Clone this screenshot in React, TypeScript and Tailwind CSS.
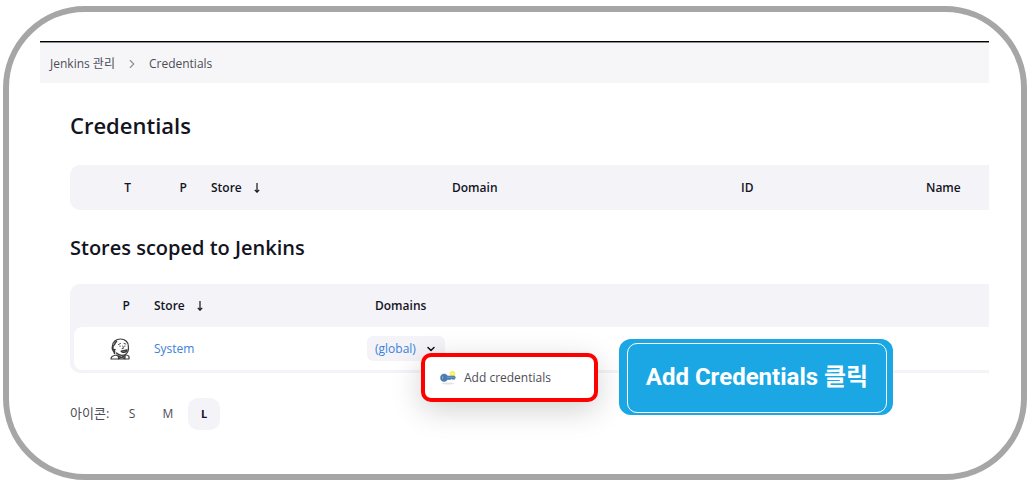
import { ChevronDown, ChevronRight } from "lucide-react";

function ButlerIcon() {
  return (
    <svg
      viewBox="0 0 20 22"
      className="ml-auto h-[22px] w-5"
      fill="none"
      stroke="#3a3a3a"
      strokeWidth="1.2"
      strokeLinecap="round"
      strokeLinejoin="round"
    >
      {/* head */}
      <path
        d="M4 14C2 12 2 9.500 2.500 8C2.500 4 6 1 10.500 1C15 1 18.300 4 18.300 8C18.800 11 18 14.500 15.500 16.500C12 18 8.500 17 6.500 15"
        fill="#fff"
      />
      <path d="M3.500 7.500C5.500 7 4.500 4.500 6.500 3.500M3 8.500C2 11 4 12.500 5 11.500M4.500 13V15.500" strokeWidth="1.6" />
      {/* face */}
      <path d="M8.500 6.500L10.500 5.500M14 5.500L15.800 6M10 8V8.500M14.800 8V8.500M12.800 8L13.500 10.300L12 10.700" strokeWidth="0.9" />
      <path d="M11 13.200C12.500 12 14.500 12.500 17 11.800C17 14.500 12.500 15.500 11 13.200Z" fill="#666" />
      {/* suit */}
      <path d="M1 21C0.800 18.500 3 17.500 6.500 17L8.500 18.500M1 21H19V18.500C18.500 17.500 17 17 15.500 17" />
      <path d="M8.500 18L11.500 19.200L15 17.500V20.800L11.500 19.500L8.500 20.800Z" fill="#777" />
    </svg>
  );
}

function NewCredentialIcon() {
  return (
    <svg viewBox="0 0 16 16" className="size-4 shrink-0">
      <ellipse cx="8" cy="13.500" rx="6" ry="1" fill="#e2e2e2" />
      <circle cx="12.500" cy="3.800" r="2.800" fill="#fbf04a" />
      <circle cx="12.500" cy="3.800" r="1" fill="#fffbc0" />
      <path
        d="M4 4C6 4 7 5 7.500 6H14.500L15.500 7.500L14.500 9.300H12.500L11.500 8.800L10.500 9.500H7.500C7 10.700 5.500 11.500 4 11.500C1.800 11.500 0.500 10 0.500 7.800C0.500 5.500 2 4 4 4Z"
        fill="#4a7db8"
        stroke="#3f70a6"
        strokeWidth="0.500"
      />
      <ellipse cx="2.800" cy="7.800" rx="0.800" ry="1.700" fill="#c3d2e3" stroke="#2f5785" strokeWidth="0.500" />
      <path d="M7 7.300H14.500" stroke="#87abd3" strokeWidth="0.700" />
    </svg>
  );
}

function SortArrow() {
  return (
    <svg viewBox="0 0 6 10" className="ml-3 inline-block h-[10px] w-[6px]" fill="none" stroke="#14141f" strokeWidth="1.200">
      <path d="M3 0V9M0.800 6.800L3 9.200L5.200 6.800" />
    </svg>
  );
}

const sizes = ["S", "M", "L"];

export default function App() {
  return (
    <div className="min-h-screen bg-white pt-[6px] pr-[2px] pb-[2px] pl-[3px] font-['Open_Sans','Noto_Sans_CJK_KR',sans-serif] text-[#14141f]">
      <div className="rounded-[82px] border-[6px] border-[#a6a6a6] pt-[29px] pr-8 pb-11 pl-[31px]">
        {/* Breadcrumbs */}
        <nav className="border-t border-black bg-[#f6f6f8]">
          <ol className="flex h-[41px] items-center gap-[10px] border-t border-[#8c8c8e] pt-[2px] pl-[10px] text-[12px] text-[#4d4d57]">
            <li>
              <a href="#manage">Jenkins 관리</a>
            </li>
            <li aria-hidden="true">
              <ChevronRight className="size-[14px] text-[#8f8fa3]" strokeWidth={2} />
            </li>
            <li>
              <a href="#credentials">Credentials</a>
            </li>
          </ol>
        </nav>

        <main className="pl-[30px]">
          <h1 className="pt-[26px] text-[22px] leading-8 font-semibold">Credentials</h1>

          <div className="mt-6 overflow-hidden rounded-l-[10px] bg-[#f3f3f8]">
            <table className="w-full table-fixed text-left text-[12px]">
              <thead>
                <tr className="h-[45px] *:px-3 *:font-semibold">
                  <th className="w-[73px] text-right">T</th>
                  <th className="w-[56px] text-right">P</th>
                  <th className="w-[241px]">
                    Store
                    <SortArrow />
                  </th>
                  <th className="w-[289px]">Domain</th>
                  <th className="w-[185px]">ID</th>
                  <th>Name</th>
                </tr>
              </thead>
            </table>
          </div>

          <h2 className="mt-6 text-[20px] leading-7 font-semibold">Stores scoped to Jenkins</h2>

          <div className="relative mt-[22px] rounded-l-[10px] bg-[#f3f3f8] pb-[3px] pl-1">
            <table className="w-full table-fixed border-separate border-spacing-0 text-left text-[12px]">
              <thead>
                <tr className="h-[43px] *:px-3 *:font-semibold">
                  <th className="w-[68px] text-right">P</th>
                  <th className="w-[221px]">
                    Store
                    <SortArrow />
                  </th>
                  <th>Domains</th>
                </tr>
              </thead>
              <tbody>
                <tr className="h-[43px] text-[#3c82d8] *:bg-white">
                  <td className="rounded-l-lg px-3">
                    <ButlerIcon />
                  </td>
                  <td className="px-3">
                    <a href="#system">System</a>
                  </td>
                  <td className="px-1">
                    <div className="relative flex w-[78px] items-center justify-between rounded-md bg-[#f3f3f8] px-2">
                      <a href="#global" className="leading-[25px]">
                        (global)
                      </a>
                      <button type="button" aria-label="Open menu" className="text-[#14141f]">
                        <ChevronDown className="size-3" strokeWidth={3} />
                      </button>
                      <div className="absolute top-[17px] left-[54px] z-10 w-[177px] rounded-[10px] border-4 border-[#fe0000] bg-white shadow-[0_8px_30px_rgba(0,0,0,0.18)]">
                        <button type="button" className="flex h-[41px] w-full items-center gap-2 px-[15px] text-[12px] text-[#4d4d57]">
                          <NewCredentialIcon />
                          Add credentials
                        </button>
                      </div>
                    </div>
                  </td>
                </tr>
              </tbody>
            </table>

            {/* Callout */}
            <div className="absolute top-[55px] left-[549px] h-[76px] w-[274px] rounded-xl bg-[#1aa7e4] pt-1 pr-[6px] pb-[2px] pl-2">
              <p className="flex h-full items-center justify-center rounded-[10px] border border-white pb-[2px] font-[Roboto,'Noto_Sans_CJK_KR',sans-serif] text-[24px] font-bold whitespace-nowrap text-white">
                Add Credentials 클릭
              </p>
            </div>
          </div>

          {/* Icon size picker */}
          <div className="mt-[25px] flex items-center gap-1 text-[12px] text-[#4d4d57]">
            <span className="w-[42px] text-[13px]">아이콘:</span>
            {sizes.map((size) => (
              <button
                key={size}
                type="button"
                aria-pressed={size === "L"}
                className={
                  size === "L"
                    ? "size-8 rounded-[10px] bg-[#f3f3f8] text-[11px] font-bold text-[#14141f]"
                    : "size-8 rounded-[10px]"
                }
              >
                {size}
              </button>
            ))}
          </div>
        </main>
      </div>
    </div>
  );
}
